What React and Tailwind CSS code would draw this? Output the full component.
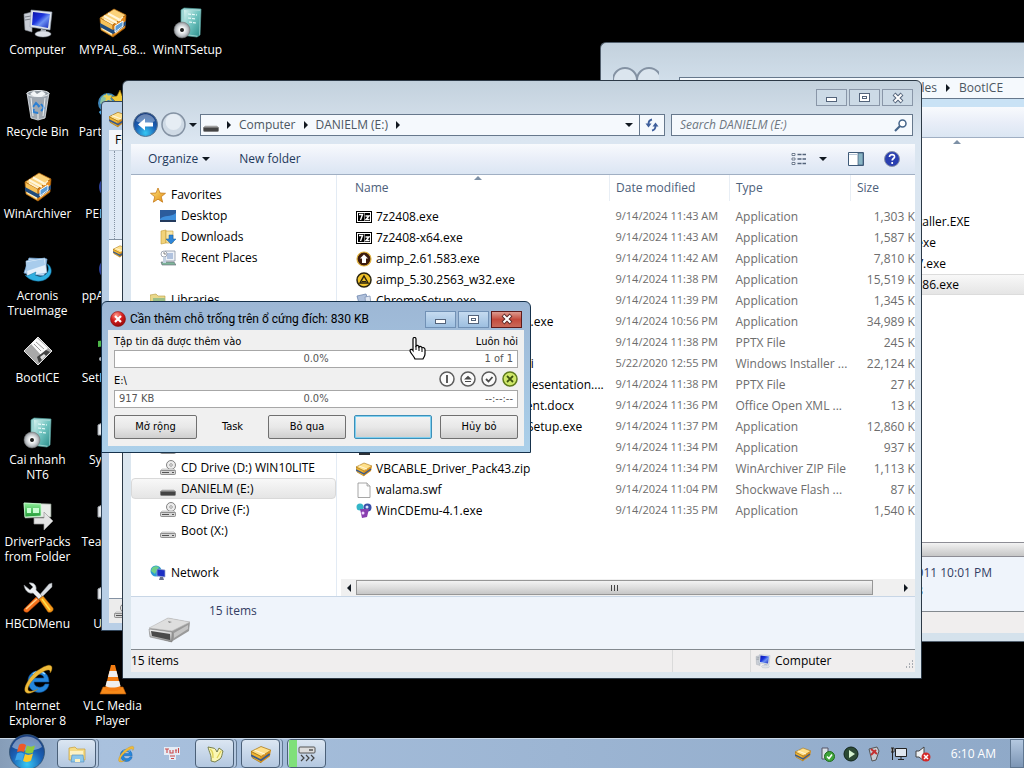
import React, { useState } from 'react';

/* ---------- icons ---------- */

const Svg = ({ size = 16, box = 16, className = '', children }) => (
    <svg width={size} height={size} viewBox={`0 0 ${box} ${box}`} className={`shrink-0 ${className}`} aria-hidden="true">
        {children}
    </svg>
);

const Gradients = () => (
    <svg className="absolute size-0" aria-hidden="true">
        <defs>
            <linearGradient id="screen" x1="0" y1="0" x2="1" y2="1">
                <stop offset="0" stopColor="#0a10a8" />
                <stop offset="0.4" stopColor="#1c35dc" />
                <stop offset="0.6" stopColor="#6d92f4" />
                <stop offset="1" stopColor="#1526b8" />
            </linearGradient>
            <linearGradient id="teal" x1="0" y1="0" x2="1" y2="1">
                <stop offset="0" stopColor="#d8f2f0" />
                <stop offset="0.5" stopColor="#6fc3bf" />
                <stop offset="1" stopColor="#2d8f8c" />
            </linearGradient>
            <linearGradient id="metal" x1="0" y1="0" x2="0" y2="1">
                <stop offset="0" stopColor="#f8f8f8" />
                <stop offset="1" stopColor="#8c8c8c" />
            </linearGradient>
            <linearGradient id="gold" x1="0" y1="0" x2="1" y2="1">
                <stop offset="0" stopColor="#ffe680" />
                <stop offset="1" stopColor="#e08a10" />
            </linearGradient>
            <linearGradient id="green" x1="0" y1="0" x2="0" y2="1">
                <stop offset="0" stopColor="#8ff09a" />
                <stop offset="1" stopColor="#1f9a34" />
            </linearGradient>
            <radialGradient id="disc">
                <stop offset="0" stopColor="#777" />
                <stop offset="0.25" stopColor="#fff" />
                <stop offset="0.7" stopColor="#c4c8cc" />
                <stop offset="1" stopColor="#8b8f94" />
            </radialGradient>
            <radialGradient id="blueBall" cx="0.5" cy="0.85" r="0.9">
                <stop offset="0" stopColor="#36c8f4" />
                <stop offset="0.5" stopColor="#1a5fb4" />
                <stop offset="1" stopColor="#1a3672" />
            </radialGradient>
            <radialGradient id="redBall" cx="0.4" cy="0.25" r="0.8">
                <stop offset="0" stopColor="#ff9a8a" />
                <stop offset="0.5" stopColor="#d41d1d" />
                <stop offset="1" stopColor="#8a0808" />
            </radialGradient>
        </defs>
    </svg>
);

const ComputerIcon = ({ size }) => (
    <Svg size={size} box={32}>
        <path d="M2 7l8-2v20l-7-2z" fill="#c9ced6" stroke="#8d939b" strokeWidth="0.6" />
        <path d="M3 10l6-1M3 13l6-1" stroke="#7b8088" />
        <path d="M9 3l21 2-2 18-20-3z" fill="#dfe5ee" stroke="#8d98a8" strokeWidth="0.6" />
        <path d="M11 5l17 2-2 14-16-3z" fill="url(#screen)" />
        <path d="M19 22l5 1v3h-6z" fill="#b4bac4" />
        <ellipse cx="21" cy="27" rx="8" ry="3" fill="#dde1e8" stroke="#979ea8" strokeWidth="0.5" />
    </Svg>
);

const ArchiveIcon = ({ size }) => (
    <Svg size={size} box={32}>
        <path d="M3 11L17 2l12 6-13 10z" fill="#fbd27a" stroke="#b86a0c" strokeWidth="0.7" />
        <path d="M3 11l13 7v12L4 23z" fill="#f7c25a" stroke="#b86a0c" strokeWidth="0.7" />
        <path d="M16 18l13-10-1 13-12 9z" fill="#e38a1c" stroke="#a85c08" strokeWidth="0.7" />
        <path d="M7 9l13 7M11 6.500l13 7" stroke="#fff6dc" strokeWidth="2" />
        <path d="M7 12l9 5M21 14l5-4M5 21l10 6M18 26l9-7" stroke="#fff1cf" strokeWidth="1.500" />
        <path d="M3 16l13 7 13-9v4l-13 9-13-7z" fill="#1f4a7c" />
        <path d="M18 19l8-5v5l-8 6z" fill="#5a9bd6" stroke="#fff" strokeWidth="1" />
    </Svg>
);

const SetupIcon = ({ size }) => (
    <Svg size={size} box={32}>
        <path d="M9 3l3-2 17 1-1 26-3 2-16-2z" fill="#9fd6d4" stroke="#4d9c99" strokeWidth="0.7" />
        <path d="M12 3l16 1-1 25-14-2z" fill="url(#teal)" />
        <path d="M16 7l9 1M16 11l8 1M17 15l7 1" stroke="#e9fbfa" strokeWidth="1.200" strokeDasharray="3 1" />
        <circle cx="10" cy="23" r="8" fill="url(#disc)" stroke="#777" strokeWidth="0.5" />
        <circle cx="10" cy="23" r="2" fill="#222" />
    </Svg>
);

const BinIcon = ({ size }) => (
    <Svg size={size} box={32}>
        <path d="M5 4h22l-4 25-7 2-7-2z" fill="#bcc6d0" fillOpacity="0.85" stroke="#e9eef3" strokeWidth="0.8" />
        <ellipse cx="16" cy="4.500" rx="11" ry="3" fill="#8e979f" stroke="#eef2f6" strokeWidth="1" />
        <path d="M8 5l4-3 3 3 5-3 4 3-5 3-8-1z" fill="#f3f6f8" />
        <path d="M11 18l3-4 3 3-1 1M19 15l3 4-3 3M12 20l-1 3 5 1" fill="none" stroke="#2a7fd4" strokeWidth="2" />
        <path d="M9 9l2 18M23 9l-2 18M16 25v5" stroke="#f4f8fb" strokeWidth="0.9" />
    </Svg>
);

const GlobeStarIcon = ({ size }) => (
    <Svg size={size} box={32}>
        <circle cx="11" cy="14" r="10" fill="#3f86b8" />
        <path d="M4 9c4-5 8-4 11-2-1 4-5 2-5 6s-5 4-7 1z" fill="#8cc6a8" />
        <path d="M23 1l2 6 6 1-5 4 1 6-5-3-5 3 1-6-4-4 6-1z" fill="#f1c936" stroke="#a77b08" strokeWidth="0.6" />
        <path d="M9 4l2 3 4-1-2 3 2 3-4-1-3 2 1-4-3-2 3-1z" fill="#e8cf52" />
        <path d="M3 22l6 8" stroke="#4aa6e0" strokeWidth="3" />
    </Svg>
);

const BallIcon = ({ size }) => (
    <Svg size={size} box={32}>
        <circle cx="13" cy="16" r="11" fill="#2b3f98" />
        <path d="M4 10c4-6 12-7 16-2-6 0-8 6-15 6z" fill="#5fae4a" />
    </Svg>
);

const ImageIcon = ({ size }) => (
    <Svg size={size} box={32}>
        <path d="M7 5l18 1-3 17-20-3z" fill="#c7ddf4" stroke="#6fa2d2" strokeWidth="0.8" />
        <path d="M4 8l19-3 2 15-20 3z" fill="#e3f0fc" stroke="#8ab8e0" strokeWidth="0.7" />
        <path d="M5 9l17-3 1 6-18 6z" fill="#a8ccec" />
        <path d="M3 22c6 8 22 9 26-2 1-4-1-8-4-9 3 5 1 10-4 12-4 1-5 0-8-1l1-3-9 4z" fill="#2fb0e2" stroke="#126f9e" strokeWidth="0.5" />
    </Svg>
);

const FloppyIcon = ({ size }) => (
    <Svg size={size} box={32}>
        <path d="M16 2l14 14-14 14L2 16z" fill="#a9a9a9" stroke="#e6e6e6" />
        <path d="M9 9l6-6 11 10-7 7z" fill="#fafafa" />
        <path d="M12 9l7 7M14 7l8 7" stroke="#999" />
        <path d="M15 22l9-7 4 2-11 11z" fill="#444" />
        <path d="M18 22l4-3 2 2-4 4z" fill="#ddd" />
    </Svg>
);

const DriverIcon = ({ size }) => (
    <Svg size={size} box={32}>
        <path d="M2 4l27 1v13l-26 1z" fill="#e8ece8" stroke="#7d8a7d" strokeWidth="0.7" />
        <path d="M2 4l17 1v12l-16 1z" fill="url(#green)" stroke="#c9ffd2" strokeWidth="0.8" />
        <path d="M5 9h4v5H5zM11 9h6v5h-6z" fill="#c9ffd2" />
        <path d="M12 19h10v-6l9 9-9 9v-6H12z" fill="#e4e4e4" stroke="#9b9b9b" strokeWidth="0.7" />
    </Svg>
);

const ToolsIcon = ({ size }) => (
    <Svg size={size} box={32}>
        <path d="M30 2l-3 1-12 14 2 2L30 6z" fill="#d8dde2" stroke="#84898f" strokeWidth="0.5" />
        <path d="M2 28l12-12 4 4L6 31c-3 1-5-1-4-3z" fill="#f5701c" stroke="#a83c04" strokeWidth="0.5" />
        <path d="M4 28l11-10" stroke="#ffd28a" strokeWidth="1.500" />
        <path d="M2 4c1 7 6 9 9 8l6 6 3-3-6-6c1-4-2-8-7-7l4 4-3 3z" fill="#eceff2" stroke="#84898f" strokeWidth="0.6" />
        <path d="M17 18l4-3 10 12c1 3-2 5-5 4z" fill="#f79a1a" stroke="#a85c08" strokeWidth="0.5" />
        <path d="M20 18l8 11" stroke="#ffe24a" strokeWidth="1.500" />
    </Svg>
);

const IEIcon = ({ size }) => (
    <Svg size={size} box={32}>
        <path d="M27 19H12c0 6 9 7 11 2h4c-2 12-20 11-21-2C5 5 27 3 27 19zm-5-4c-1-5-9-5-10 0z" fill="#2587dd" stroke="#0d4f96" strokeWidth="0.6" />
        <path d="M11 11c3-3 9-3 12 0" stroke="#9fdcff" strokeWidth="1.500" fill="none" />
        <path d="M5 30c-6-2 1-15 10-22 8-6 15-8 15-3 0 2-1 4-2 5 1-4-3-4-9 0C11 15 3 26 7 28c3 1 7-1 9-2-4 3-8 5-11 4z" fill="#efbb3a" stroke="#a3740f" strokeWidth="0.4" />
    </Svg>
);

const ConeIcon = ({ size }) => (
    <Svg size={size} box={32}>
        <path d="M6 24h20l3 7H3z" fill="#f68a1a" stroke="#b85708" strokeWidth="0.6" />
        <path d="M14 2h4l6 24c-4 3-12 3-16 0z" fill="#f47d12" />
        <path d="M12.500 8h7l1.500 6H11zM9.800 18h12.400l1.300 5c-5 2-11 2-15 0z" fill="#efefef" />
    </Svg>
);

const MiscIcon = ({ size }) => (
    <Svg size={size} box={32}>
        <path d="M1 6l8-1v6l-8 1z" fill="#4cb648" />
        <circle cx="4" cy="24" r="2" fill="#a9b0b8" />
        <path d="M12 10l14 8" stroke="#99a" strokeWidth="3" />
    </Svg>
);

const PageIcon = ({ size }) => (
    <Svg size={size} box={32}>
        <path d="M1 8l8-4h14v14H1z" fill="#e8ebee" stroke="#9a9fa6" />
    </Svg>
);

const StarIcon = () => (
    <Svg>
        <path d="M8 1l2 5 5.500.3-4.300 3.500 1.500 5.400L8 12.200l-4.700 3 1.500-5.400L.5 6.300 6 6z" fill="url(#gold)" stroke="#c77b1a" strokeWidth="0.8" />
    </Svg>
);

const DesktopIcon = () => (
    <Svg>
        <path d="M0 2h16v12H0z" fill="#2c5c9c" />
        <path d="M0 11c5-5 10-1 16-6v7H0z" fill="#3f8fdc" />
        <path d="M0 12h16v2H0z" fill="#233a5c" />
    </Svg>
);

const DownloadsIcon = () => (
    <Svg>
        <path d="M1 2l5-1v13l-5 1z" fill="#f1d27a" stroke="#c59c38" strokeWidth="0.6" />
        <path d="M6 2h7v12H6z" fill="#f8e6a8" stroke="#c59c38" strokeWidth="0.6" />
        <path d="M9 6h4v4h3l-5 5-5-5h3z" fill="#2f86d8" stroke="#145a9c" strokeWidth="0.5" />
    </Svg>
);

const RecentIcon = () => (
    <Svg>
        <path d="M5 1h10v10H5z" fill="#eef2f8" stroke="#8b94a3" strokeWidth="0.8" />
        <path d="M7 4h6M7 6h6M7 8h6" stroke="#7493c4" />
        <circle cx="4" cy="4" r="3" fill="#fff" stroke="#8b94a3" strokeWidth="0.8" />
        <path d="M4 2v2h2" stroke="#555" strokeWidth="0.7" fill="none" />
        <path d="M1 12h13l2 3H2z" fill="#7fb59a" stroke="#667" strokeWidth="0.6" />
        <path d="M3 7h3v6H3z" fill="#c5d2e2" />
    </Svg>
);

const LibraryIcon = () => (
    <Svg>
        <path d="M0 3l6-1 2 2h7v10H0z" fill="#e9d88a" stroke="#b89a3c" strokeWidth="0.6" />
        <path d="M3 6h12v8H3z" fill="#9bbf8a" />
    </Svg>
);

const DriveIcon = ({ dark, cd }) => (
    <Svg>
        {cd && <circle cx="11" cy="5" r="4.500" fill="#ececec" stroke="#777" strokeWidth="0.9" />}
        {cd && <circle cx="11" cy="5" r="1.300" fill="#fff" stroke="#777" strokeWidth="0.7" />}
        <path d="M2 9h12l2 2H0z" fill={dark ? '#a5a5a5' : '#e6e6e6'} stroke={dark ? '#999' : '#9a9a9a'} strokeWidth="0.5" />
        <rect x="0.500" y="10.500" width="15" height="4" rx="1" fill={dark ? '#444' : '#d6d6d6'} stroke="#7a7a7a" strokeWidth="0.8" />
        {!dark && <path d="M2 12.500h7M12 12.500h2" stroke="#555" />}
    </Svg>
);

const NetworkIcon = () => (
    <Svg>
        <circle cx="6" cy="6" r="5.500" fill="#2b9ad4" />
        <path d="M2 3c2-2 5-2 7-1L7 5 5 9 1 6z" fill="#6ed08a" />
        <path d="M7 4l8 1v7l-8-1z" fill="#1c2fc4" stroke="#9aa6cc" strokeWidth="0.7" />
        <path d="M10 12h3l1 3H9z" fill="#67708c" />
    </Svg>
);

const SevenZipIcon = () => (
    <Svg>
        <rect x="0.500" y="2.500" width="15" height="11" fill="#fff" stroke="#000" strokeWidth="1" />
        <path d="M2 4h6v8H2zM8.500 4H14v8H8.500z" fill="#000" />
        <path d="M3 5.500h3.500L4.500 11M9.500 7h3.500l-3 3.500h3.500" stroke="#fff" strokeWidth="1.400" fill="none" />
    </Svg>
);

const AimpOldIcon = () => (
    <Svg>
        <circle cx="8" cy="8" r="7" fill="#3c1c10" stroke="#e2b33c" strokeWidth="1.200" />
        <path d="M8 3.500l4 4h-2V12H6V7.500H4z" fill="#fff" />
    </Svg>
);

const AimpIcon = () => (
    <Svg>
        <circle cx="8" cy="8" r="7" fill="#f0c22a" stroke="#2a2410" strokeWidth="1.500" />
        <path d="M8 4l4 7H4z" fill="none" stroke="#2a2410" strokeWidth="1.500" />
        <path d="M6 9.500h4" stroke="#2a2410" />
    </Svg>
);

const InstallerIcon = () => (
    <Svg>
        <path d="M1 3l9-2 3 9-9 4z" fill="#aebfda" stroke="#6f87ae" strokeWidth="0.8" />
        <path d="M9 4l5-1 1 9-5 2z" fill="#dfe6f2" stroke="#8093b4" strokeWidth="0.8" />
    </Svg>
);

const FileIcon = () => (
    <Svg>
        <path d="M2 1h9l3 3v11.500H2z" fill="#fdfdfd" stroke="#8f8f8f" strokeWidth="0.8" />
        <path d="M11 1v3h3" fill="#e4e4e4" stroke="#8f8f8f" strokeWidth="0.7" />
    </Svg>
);

const DarkExeIcon = () => (
    <Svg>
        <path d="M3 3h11v12H3z" fill="#2c3036" />
    </Svg>
);

const ZipIcon = ({ size = 16 }) => (
    <Svg size={size}>
        <path d="M0 6l8-4 8 3-8 5z" fill="#ffe08a" stroke="#a87410" strokeWidth="0.6" />
        <path d="M0 6l8 4v5L1 11z" fill="#f2b632" stroke="#a87410" strokeWidth="0.6" />
        <path d="M8 10l8-5-1 5-7 5z" fill="#d8901a" />
        <path d="M0 9l8 4 7-5" stroke="#3b5a8c" strokeWidth="1.500" fill="none" />
        <path d="M3 5l8 3" stroke="#fff6d8" />
    </Svg>
);

const CdEmuIcon = () => (
    <Svg>
        <circle cx="4" cy="4" r="3.500" fill="#35b6c8" />
        <circle cx="11.500" cy="4.500" r="4" fill="#3a4fa8" />
        <path d="M4 6h9l-2 8-5 1z" fill="#8a3fb0" />
        <circle cx="11" cy="4" r="1.500" fill="#d9e6ff" />
        <circle cx="7" cy="10" r="1.500" fill="#f0d8ff" />
    </Svg>
);

const FlagIcon = () => (
    <Svg size={36} box={36}>
        <circle cx="18" cy="18" r="17.500" fill="url(#blueBall)" stroke="#31506f" strokeWidth="0.8" />
        <path d="M3 13C8-1 28-1 33 13c-8 5-22 5-30 0z" fill="#fff" fillOpacity="0.4" />
        <path d="M10 11c3-2 5-1 7 0l-2 7c-2-1-4-1-7 0z" fill="#ee5a28" />
        <path d="M18 11.500c3 1.500 5 1.500 8 0l-2 7c-3 1.500-5 1-8 0z" fill="#8fcb3c" />
        <path d="M8 19.500c3-1.500 5-1 7 .5l-2 7c-2-1.500-4-1.500-7-.5z" fill="#3fa4ea" />
        <path d="M16 20c3 1.500 5 1 8-.5l-2 7c-3 2-5 1.500-8 .5z" fill="#fbc92a" />
    </Svg>
);

const FolderIcon = () => (
    <Svg size={20} box={20}>
        <path d="M2 4l6-1 2 2h8v11H2z" fill="#f5dc86" stroke="#c79e3a" strokeWidth="0.7" />
        <path d="M3 7h13v4H3z" fill="#fdf3c4" />
        <path d="M5 11h11l1 7H4z" fill="#8cc8ec" stroke="#5a93bd" strokeWidth="0.7" />
        <path d="M8 15h5v3H8z" fill="#fdf3c4" />
    </Svg>
);

const TutiIcon = () => (
    <Svg size={20} box={20}>
        <path d="M2 3h16v8h-4v5H7v-5H2z" fill="#fff" fillOpacity="0.7" />
        <path d="M3 5h4M5 5v4M8 6v3h3V6M13 6h2M14 6v3M16.500 4v5M8 12h5M9 14.500h3" stroke="#cc4a4a" strokeWidth="1.100" fill="none" />
    </Svg>
);

const HornIcon = () => (
    <Svg size={20} box={20}>
        <path d="M3 3l5 1c2 0 3 2 4 4l2-4 4 3c-1 3-1 6-3 8l-5 3-4-1c1-5-2-9-3-14z" fill="#fbf7b4" stroke="#6b7440" strokeWidth="0.9" />
        <path d="M5 5c3 2 3 5 3 9M16 7l-4 7" stroke="#e0d45a" strokeWidth="1.300" fill="none" />
    </Svg>
);

const CopyIcon = () => (
    <Svg size={20} box={20}>
        <rect x="2" y="3" width="16" height="6" rx="1" fill="#dcdcdc" stroke="#555" />
        <path d="M12 6h4" stroke="#555" strokeWidth="1.500" />
        <path d="M4 11l3 3-3 3M9 11l3 3-3 3M14 11l3 3-3 3" stroke="#444" strokeWidth="1.200" fill="none" />
    </Svg>
);

const RemovableDriveIcon = () => (
    <svg width="44" height="26" viewBox="0 0 44 26" aria-hidden="true">
        <path d="M1 12L20 1l22 4-1 9-18 11L2 19z" fill="#9a9a9a" />
        <path d="M1 11L20 1l22 4-18 9z" fill="#dedede" stroke="#b9b9b9" strokeWidth="0.6" />
        <path d="M1 12l23 3v10L2 20z" fill="url(#metal)" stroke="#777" strokeWidth="0.5" />
        <path d="M3 14l19 3v6L4 19z" fill="#4a4a4a" />
        <path d="M26 16l14-8v4l-14 9z" fill="#c4c4c4" />
        <path d="M20 4l4 1-3 1z" fill="#888" />
    </svg>
);

/* ---------- desktop ---------- */

const shortcuts = [
    ['Computer', ComputerIcon],
    ['Recycle Bin', BinIcon],
    ['WinArchiver', ArchiveIcon],
    ['Acronis TrueImage', ImageIcon],
    ['BootICE', FloppyIcon],
    ['Cai nhanh NT6', SetupIcon],
    ['DriverPacks from Folder', DriverIcon],
    ['HBCDMenu', ToolsIcon],
    ['Internet Explorer 8', IEIcon],
    ['MYPAL_68...', ArchiveIcon],
    ['PartitionWiz', GlobeStarIcon],
    ['PENetwrk', BallIcon],
    ['ppApps Go', BallIcon],
    ['SetHDBoot', MiscIcon],
    ['Synaptic Cap', PageIcon],
    ['TeamViewr', PageIcon],
    ['Unlock', PageIcon],
    ['VLC Media Player', ConeIcon],
    ['WinNTSetup', SetupIcon],
];

const Desktop = () => (
    <div className="grid h-full grid-flow-col grid-rows-9 auto-cols-[75px] justify-start">
        {shortcuts.map(([name, Icon]) => (
            <button key={name} className="flex flex-col items-center px-1 pt-[7px] text-white">
                <Icon size={32} />
                <span className="mt-[3px] text-center leading-[15px]">{name}</span>
            </button>
        ))}
    </div>
);

const CaptionButtons = ({ active, className = '' }) => (
    <div className={`flex gap-0.5 text-[#53637a] ${className}`}>
        {['Minimize', 'Maximize', 'Close'].map((name) => (
            <button
                key={name}
                aria-label={name}
                className={`flex h-[17px] w-[31px] items-center justify-center border ${
                    active && name === 'Close'
                        ? 'border-[#5e1a1a] bg-linear-to-b from-[#dc9a90] via-[#c44a3c] to-[#c9695a]'
                        : active
                            ? 'border-[#7191b5] bg-linear-to-b from-[#c5dbf0] to-[#9dbfe0]'
                            : 'border-[#8996a8] bg-[#ccdae6]'
                }`}
            >
                {name === 'Minimize' && <span className="mt-1 h-[5px] w-[11px] border border-current bg-white" />}
                {name === 'Maximize' && (
                    <span className="flex h-[9px] w-[11px] items-center justify-center border border-current bg-white">
                        <span className="h-[3px] w-[5px] border border-current" />
                    </span>
                )}
                {name === 'Close' && (
                    <Svg size={12} box={12}>
                        <path d="M2 2l8 8M10 2l-8 8" stroke={active ? '#5a2a2a' : '#53637a'} strokeWidth="4" />
                        <path d="M2.500 2.500l7 7M9.500 2.500l-7 7" stroke="#fff" strokeWidth="2" />
                    </Svg>
                )}
            </button>
        ))}
    </div>
);

/* ---------- explorer window ---------- */

const navGroups = [
    { name: 'Favorites', icon: <StarIcon />, items: [['Desktop', <DesktopIcon />], ['Downloads', <DownloadsIcon />], ['Recent Places', <RecentIcon />]] },
    { name: 'Libraries', icon: <LibraryIcon />, items: [['Documents', <LibraryIcon />], ['Music', <LibraryIcon />], ['Pictures', <LibraryIcon />], ['Videos', <LibraryIcon />]] },
    {
        name: 'Computer',
        icon: <ComputerIcon size={16} />,
        items: [
            ['Local Disk (C:)', <DriveIcon />],
            ['CD Drive (D:) WIN10LITE', <DriveIcon cd />],
            ['DANIELM (E:)', <DriveIcon dark />],
            ['CD Drive (F:)', <DriveIcon cd />],
            ['Boot (X:)', <DriveIcon />],
        ],
    },
    { name: 'Network', icon: <NetworkIcon />, items: [] },
];

const files = [
    ['7z2408.exe', <SevenZipIcon />, '9/14/2024 11:43 AM', 'Application', '1,303 KB'],
    ['7z2408-x64.exe', <SevenZipIcon />, '9/14/2024 11:43 AM', 'Application', '1,587 KB'],
    ['aimp_2.61.583.exe', <AimpOldIcon />, '9/14/2024 11:42 AM', 'Application', '7,810 KB'],
    ['aimp_5.30.2563_w32.exe', <AimpIcon />, '9/14/2024 11:38 PM', 'Application', '15,519 KB'],
    ['ChromeSetup.exe', <InstallerIcon />, '9/14/2024 11:39 PM', 'Application', '1,345 KB'],
    ['Firefox_Setup_w64_Installer.exe', <InstallerIcon />, '9/14/2024 10:56 PM', 'Application', '34,989 KB'],
    ['Lesson.pptx', <FileIcon />, '9/14/2024 11:38 PM', 'PPTX File', '245 KB'],
    ['MediaPlayerClassic_w64.msi', <InstallerIcon />, '5/22/2020 12:55 PM', 'Windows Installer ...', '22,124 KB'],
    ['My Microsoft PowerPoint Presentation....', <FileIcon />, '9/14/2024 11:38 PM', 'PPTX File', '27 KB'],
    ['My Microsoft Word Document.docx', <FileIcon />, '9/14/2024 11:36 PM', 'Office Open XML ...', '13 KB'],
    ['PotPlayerMini_x64_Full_v1_Setup.exe', <InstallerIcon />, '9/14/2024 11:37 PM', 'Application', '12,860 KB'],
    ['Rufus.exe', <DarkExeIcon />, '9/14/2024 11:34 PM', 'Application', '937 KB'],
    ['VBCABLE_Driver_Pack43.zip', <ZipIcon />, '9/14/2024 11:34 PM', 'WinArchiver ZIP File', '1,113 KB'],
    ['walama.swf', <FileIcon />, '9/14/2024 11:04 PM', 'Shockwave Flash ...', '87 KB'],
    ['WinCDEmu-4.1.exe', <CdEmuIcon />, '9/14/2024 11:35 PM', 'Application', '1,540 KB'],
];

const Caret = ({ right, className = '' }) => (
    <Svg size={8} box={8} className={className}>
        <path d={right ? 'M2 0l4 4-4 4z' : 'M0 2h8L4 6z'} fill="#111820" />
    </Svg>
);

const AddressRow = () => (
    <div className="flex items-center pr-2 pl-[10px]">
        <button aria-label="Back">
            <Svg size={25} box={25}>
                <circle cx="12.500" cy="12.500" r="12" fill="url(#blueBall)" stroke="#5d7690" />
                <path d="M3 9c3-9 16-9 19 0-5 3-14 3-19 0z" fill="#fff" fillOpacity="0.35" />
                <path d="M5 12.500l7-6v4h8v4h-8v4z" fill="#fff" />
            </Svg>
        </button>
        <button aria-label="Forward" className="ml-[3px]">
            <Svg size={25} box={25}>
                <circle cx="12.500" cy="12.500" r="11.500" fill="#cfdae5" stroke="#8492a3" strokeWidth="1.500" />
                <circle cx="12.500" cy="10" r="8" fill="#e6edf4" />
            </Svg>
        </button>
        <button aria-label="Recent pages" className="mx-[3px]">
            <Caret />
        </button>
        <div className="flex h-[22px] min-w-0 flex-1 items-center border border-[#66788c] bg-[#f5f9fd] pl-0.5 text-[#4c5661]">
            <DriveIcon dark />
            <Caret right className="ml-[6px]" />
            <span className="ml-[6px]">Computer</span>
            <Caret right className="ml-[6px]" />
            <span className="ml-[6px]">DANIELM (E:)</span>
            <Caret right className="ml-[6px]" />
            <button aria-label="Previous locations" className="mr-[6px] ml-auto">
                <Caret />
            </button>
            <button aria-label="Refresh" className="flex h-full w-[25px] items-center justify-center border-l border-[#66788c]">
                <Svg size={14} box={14}>
                    <path d="M7 1.500C4.500 2 3.500 3.500 3.500 6M7 12.500c2.500-.5 3.500-2 3.500-4.500" stroke="#3e5f9c" strokeWidth="1.800" fill="none" />
                    <path d="M.5 5.500h6l-3 4zM7.500 8.500h6l-3-4z" fill="#3e5f9c" />
                </Svg>
            </button>
        </div>
        <div className="ml-[6px] flex h-[22px] w-[242px] items-center border border-[#66788c] bg-[#f5f9fd] pr-1">
            <input
                type="search"
                aria-label="Search DANIELM (E:)"
                placeholder="Search DANIELM (E:)"
                className="min-w-0 flex-1 bg-transparent pl-2 outline-none placeholder:text-[#6d7680] placeholder:italic"
            />
            <Svg size={14} box={14}>
                <circle cx="8.500" cy="5.500" r="3.500" fill="#fff" stroke="#45658a" strokeWidth="1.500" />
                <path d="M6 8l-5 5" stroke="#45658a" strokeWidth="2.200" />
            </Svg>
        </div>
    </div>
);

const Toolbar = () => (
    <div className="flex h-[31px] items-center border-b border-[#a0afc3] bg-linear-to-b from-[#f8fafd] via-[#e9eef8] to-[#dbe6f3] pr-[15px] pl-[17px] text-[#1e395b]">
        <button className="flex items-center gap-1">
            Organize <Caret />
        </button>
        <button className="ml-[29px]">New folder</button>
        <button aria-label="Change view" className="ml-auto flex items-center gap-3">
            <Svg size={16}>
                <path d="M1 2.500h3v2H1zM1 7h3v2H1zM1 11.500h3v2H1z" fill="#fff" stroke="#53637a" strokeWidth="0.8" />
                <path d="M6.500 3.500H15M6.500 8H15M6.500 12.500H15" stroke="#53637a" strokeWidth="1.300" strokeDasharray="4 1" />
            </Svg>
            <Caret />
        </button>
        <button aria-label="Preview pane" className="ml-[21px]">
            <Svg size={16}>
                <path d="M.5 1.500h15v13H.5z" fill="#fff" stroke="#3f5a78" />
                <path d="M10 2h5v12h-5z" fill="#88b4c4" stroke="#3f5a78" strokeWidth="0.7" />
                <path d="M1 3.500h9" stroke="#b8c6d6" />
            </Svg>
        </button>
        <button aria-label="Help" className="ml-5">
            <Svg size={16}>
                <circle cx="8" cy="8" r="7.500" fill="#2a3fb0" stroke="#8a93a8" />
                <path d="M5.500 6c0-3.500 5.500-3 5 0-.3 1.500-2.300 1.700-2.300 3.500M8.200 11v2" stroke="#fff" strokeWidth="1.700" fill="none" />
            </Svg>
        </button>
    </div>
);

const NavPane = ({ selected, onSelect }) => (
    <nav className="flex w-[206px] shrink-0 flex-col gap-[21px] border-r border-[#e3ebf4] pt-[9px]">
        {navGroups.map((group) => (
            <div key={group.name}>
                <a href="#" className="flex h-[21px] items-center gap-[5px] pl-[19px]">
                    {group.icon}
                    {group.name}
                </a>
                {group.items.map(([name, icon]) => (
                    <a
                        key={name}
                        href="#"
                        onClick={() => onSelect(name)}
                        className={`flex h-[21px] items-center gap-[5px] rounded-sm border pl-[28px] ${
                            selected === name ? 'border-[#d9d9d9] bg-linear-to-b from-[#f8f8f8] to-[#e5e5e5]' : 'border-transparent'
                        }`}
                    >
                        {icon}
                        {name}
                    </a>
                ))}
            </div>
        ))}
    </nav>
);

const FileTable = () => (
    <div className="relative min-h-0 flex-1 overflow-hidden">
        <Svg size={8} box={8} className="absolute top-0 left-[133px]">
            <path d="M0 5l4-4 4 4z" fill="#7d90a5" />
        </Svg>
        <table className="w-[calc(100%+18px)] table-fixed border-collapse text-left whitespace-nowrap text-[#6d6d6d]">
            <colgroup>
                <col />
                <col className="w-[120px]" />
                <col className="w-[121px]" />
                <col className="w-[82px]" />
            </colgroup>
            <thead>
                <tr className="h-[26px] text-[#4c607a]">
                    {['Name', 'Date modified', 'Type', 'Size'].map((head) => (
                        <th key={head} className="border-r border-[#e8eef5] p-0 pl-[6px] font-normal first:pl-[14px]">{head}</th>
                    ))}
                </tr>
            </thead>
            <tbody>
                <tr className="h-[5px]" />
                {files.map(([name, icon, date, type, size]) => (
                    <tr key={name} className="h-[21px]">
                        <td className="p-0 pl-[15px] text-black">
                            <span className="flex items-center gap-1">{icon}{name}</span>
                        </td>
                        <td className="p-0 pl-[6px] text-[11px]">{date}</td>
                        <td className="p-0 pl-[6px]">{type}</td>
                        <td className="p-0 pr-[10px] text-right">{size}</td>
                    </tr>
                ))}
            </tbody>
        </table>
    </div>
);

const HScroll = () => (
    <div className="flex h-[17px] items-center bg-[#f0f0f0]">
        <button aria-label="Scroll left" className="flex w-[15px] justify-center">
            <Caret right className="rotate-180" />
        </button>
        <div className="flex h-[15px] flex-1 items-center justify-center gap-0.5 border border-[#979797] bg-linear-to-b from-[#f3f3f3] via-[#dedede] to-[#c6c6c6]">
            {[0, 1, 2].map((n) => <span key={n} className="h-[6px] w-px bg-[#444]" />)}
        </div>
        <button aria-label="Scroll right" className="ml-6 flex w-[18px] justify-center">
            <Caret right />
        </button>
    </div>
);

const Explorer = () => {
    const [selected, setSelected] = useState('DANIELM (E:)');

    return (
        <section className="absolute top-20 right-[102px] left-[122px] flex flex-col rounded-t-md border border-[#2c3946] bg-linear-to-b from-[#c3d1dd] via-[#dbe6f1] via-10% to-[#dbe6ee] pb-[6px] text-black">
            <CaptionButtons className="mt-2 mr-2 self-end" />
            <div className="mt-[6px]">
                <AddressRow />
            </div>
            <div className="mt-[7px] mr-[6px] ml-2 flex flex-col bg-white">
                <Toolbar />
                <div className="flex h-[421px]">
                    <NavPane selected={selected} onSelect={setSelected} />
                    <div className="ml-1 flex min-w-0 flex-1 flex-col">
                        <FileTable />
                        <HScroll />
                    </div>
                </div>
                <div className="flex h-[53px] gap-[17px] border-t border-[#c8d6e6] bg-[#eff4fb] pl-[17px] text-[#333d63]">
                    <div className="pt-5">
                        <RemovableDriveIcon />
                    </div>
                    <p className="pt-1.5">15 items</p>
                </div>
                <footer className="flex h-[23px] items-center border-t border-[#83898f] bg-[#f0eeee]">
                    <span className="flex-1">15 items</span>
                    <span className="h-full w-[79px] border-x border-[#dadada]" />
                    <span className="flex w-[164px] items-center gap-1 pl-1">
                        <ComputerIcon size={16} />
                        Computer
                        <Svg size={10} box={10} className="mt-2 mr-px ml-auto">
                            <path d="M8 1h1M5 4h1M8 4h1M2 7h1M5 7h1M8 7h1" stroke="#a9adb3" strokeWidth="2" />
                        </Svg>
                    </span>
                </footer>
            </div>
        </section>
    );
};

/* ---------- windows behind ---------- */

const installers = [
    ['BootICE_Installer.EXE', 'w-[361px]'],
    ['BOOTICE_old.exe', 'w-[327px]'],
    ['BOOTICE_V.exe', 'w-[337px]'],
    ['BOOTICEx86.exe', 'w-[350px]'],
];

const BootIceWindow = () => (
    <section className="absolute top-[42px] right-0 left-[600px] rounded-tl-md border border-r-0 border-[#53606e] bg-linear-to-b from-[#c3d1dd] via-[#d9e6f2] via-10% to-[#d5e2ec] pb-2 text-black">
        <div className="flex h-[34px] items-end pl-[12px]">
            <Svg size={46} box={46} className="-mb-9">
                <circle cx="12" cy="13" r="12" fill="#dbe5ee" stroke="#8492a3" strokeWidth="2" />
                <circle cx="36" cy="13" r="12" fill="#dbe5ee" stroke="#8492a3" strokeWidth="2" />
            </Svg>
        </div>
        <div className="ml-[78px] flex h-[22px] items-center gap-[7px] border border-r-0 border-[#66788c] bg-[#f5f9fd] text-[#4c5661]">
            <span className="w-[257px] text-right">Program Files</span>
            <Caret right />
            <span>BootICE</span>
        </div>
        <div className="ml-2 h-2 bg-[#c9e2f5]" />
        <div className="ml-2 h-[31px] border-b border-[#a0afc3] bg-linear-to-b from-[#f8fafd] via-[#e9eef8] to-[#dbe6f3]" />
        <div className="ml-2 h-[404px] bg-white">
            <div className="flex h-[73px] justify-end pt-px pr-[63px]">
                <Svg size={8} box={8}>
                    <path d="M0 5l4-4 4 4z" fill="#7d90a5" />
                </Svg>
            </div>
            {installers.map(([name, width], i) => (
                <div
                    key={name}
                    className={`flex h-[21px] items-center ${i === 3 ? 'border-y border-[#dcdcdc] bg-linear-to-b from-[#f8f8f8] to-[#e5e5e5]' : ''}`}
                >
                    <span className={`text-right ${width}`}>{name}</span>
                </div>
            ))}
        </div>
        <div className="ml-2 h-[15px] border-y border-[#8d8d95] bg-linear-to-b from-[#f3f3f3] to-[#c6c6c6]" />
        <div className="ml-2 h-[54px] bg-[#eff4fb] pt-2 text-[#333d63]">
            <p className="w-[383px] text-right">11/18/2011 10:01 PM</p>
            <p className="w-[314px] text-right leading-5">58 KB</p>
        </div>
        <div className="ml-2 h-[22px] border-t border-[#83898f] bg-[#f0eeee]" />
    </section>
);

const ArchiverWindow = () => (
    <section className="absolute top-[101px] left-[101px] h-[530px] w-[420px] rounded-t-sm border border-[#33475c] bg-[#b9cfe6] pt-2 pr-[7px] pb-[7px] pl-[7px] text-black">
        <div className="flex h-full flex-col">
            <ZipIcon size={18} />
            <div className="mt-0.5 flex h-5 shrink-0 items-center bg-[#f4f7fb] pl-[6px]">File</div>
            <div className="h-[89px] shrink-0 border-t border-[#bcc8d6] bg-[#dfe9f5] pl-[5px]">
                <div className="h-full border-l border-dotted border-[#8492a3]" />
            </div>
            <div className="flex-1 border-y border-[#8492a3] bg-white pt-1 pl-1">
                <ZipIcon size={14} />
            </div>
            <div className="flex h-6 shrink-0 items-center bg-[#ececec] pl-[5px]">
                <DriveIcon cd />
            </div>
        </div>
    </section>
);

/* ---------- copy dialog ---------- */

const Progress = ({ left, percent, right }) => (
    <div className="grid h-[18px] grid-cols-3 items-center border border-[#a7a7a7] bg-white px-1 text-[#555]">
        <span>{left}</span>
        <span className="text-center">{percent}</span>
        <span className="text-right">{right}</span>
    </div>
);

const roundButtons = [
    ['Pause', 'M8 4v8'],
    ['Eject', 'M5.500 8L8 5.500l2.500 2.500zM5 10.500h6'],
    ['Verify', 'M5 8l2.500 2.500L11.500 6'],
    ['Stop', 'M5 5l6 6M11 5l-6 6'],
];

const CopyDialog = () => (
    <section className="absolute top-[301px] left-[101px] w-[430px] rounded-t-md border border-[#16324c] bg-linear-to-b from-[#9db7d5] to-[#abd0ea] px-[6px] pb-[6px] font-['DejaVu_Sans_Condensed','DejaVu_Sans',sans-serif] text-[11px] text-black">
        <header className="flex h-[28px] items-center gap-1 pt-1.5 pr-0.5 pl-0.5">
            <Svg size={16}>
                <circle cx="8" cy="8" r="7.500" fill="url(#redBall)" stroke="#8a1414" strokeWidth="0.6" />
                <path d="M5 5l6 6M11 5l-6 6" stroke="#fff" strokeWidth="2.200" />
            </Svg>
            <h1 className="flex-1 font-[Roboto,'Open_Sans',sans-serif] text-xs">Cần thêm chỗ trống trên ổ cứng đích: 830 KB</h1>
            <CaptionButtons active />
        </header>
        <div className="bg-[#f0f0f0] px-[6px] pt-1 pb-[7px]">
            <div className="flex h-4 items-center justify-between">
                <span>Tập tin đã được thêm vào</span>
                <span>Luôn hỏi</span>
            </div>
            <Progress percent="0.0%" right="1 of 1" />
            <div className="flex h-[22px] items-center gap-[5px]">
                <span className="mr-auto pt-1">E:\</span>
                {roundButtons.map(([name, path]) => (
                    <button key={name} aria-label={name}>
                        <Svg size={16}>
                            <circle cx="8" cy="8" r="7" fill={name === 'Stop' ? '#cfe86a' : '#fbfbfb'} stroke={name === 'Stop' ? '#5e7a1c' : '#5c5c5c'} strokeWidth="1.500" />
                            <path d={path} stroke={name === 'Stop' ? '#3d5410' : '#4a4a4a'} strokeWidth={name === 'Eject' ? '1.200' : '1.800'} fill={name === 'Eject' ? '#4a4a4a' : 'none'} />
                        </Svg>
                    </button>
                ))}
            </div>
            <Progress left="917 KB" percent="0.0%" right="--:--:--" />
            <div className="mt-[7px] grid grid-cols-[83px_55px_78px_78px_78px] justify-between text-center">
                {['Mở rộng', 'Task', 'Bỏ qua', '', 'Hủy bỏ'].map((name) =>
                    name === 'Task' ? (
                        <span key={name} className="leading-6">{name}</span>
                    ) : (
                        <button
                            key={name}
                            aria-label={name || 'Retry'}
                            className={`h-6 rounded-xs border bg-linear-to-b from-[#f3f3f3] via-[#e8e8e8] to-[#cfcfcf] ${
                                name ? 'border-[#707070]' : 'border-[#3c8fb8] ring-1 ring-[#7fd0f0] ring-inset'
                            }`}
                        >
                            {name}
                        </button>
                    )
                )}
            </div>
        </div>
    </section>
);

const HandCursor = () => (
    <svg width="18" height="24" viewBox="0 0 18 24" className="absolute top-[337px] left-[409px]" aria-hidden="true">
        <path
            d="M4 2c0-2 3-2 3 0v7c1-1 3-.5 3 1 1-1 3-.5 3 1 1-1 3-.3 3 1.500V17c0 2-1 3-2 5H6c-1-3-4-5-5-8 0-2 2-2 3-.5z"
            fill="#fff"
            stroke="#000"
            strokeWidth="1.200"
        />
        <path d="M7 9v4M10 10v4M13 12v3" stroke="#000" />
    </svg>
);

/* ---------- taskbar ---------- */

const TaskButton = ({ label, stacked, progress, children }) => (
    <button
        aria-label={label}
        className={`flex h-full w-[39px] items-center justify-center rounded-sm border border-[#4b6078] bg-linear-to-b from-[#dbe6f2] to-[#b4c8e0] ${
            stacked ? 'mr-[7px] shadow-[2px_0_0_#b4c8e0,3px_0_0_#5f7690]' : 'mr-1'
        }`}
    >
        {progress && <span className="-ml-2 h-full w-2 bg-[#7fe07a]" />}
        {children}
    </button>
);

const trayIcons = [
    ['WinArchiver', <ZipIcon />],
    ['Safely remove', (
        <Svg>
            <path d="M3 2h6v11H3z" fill="#d8dfe6" stroke="#556" />
            <circle cx="10.500" cy="10.500" r="5" fill="#3fa53a" stroke="#1f6a1c" />
            <path d="M8 10.500l2 2 3-4" stroke="#fff" strokeWidth="1.500" fill="none" />
        </Svg>
    )],
    ['Play', (
        <Svg>
            <circle cx="8" cy="8" r="7" fill="#2c4a34" stroke="#10231a" />
            <path d="M6 4l6 4-6 4z" fill="#d5f2d0" />
        </Svg>
    )],
    ['Keyboard', (
        <Svg>
            <path d="M2 3l8-2 2 4-3 9-4 1z" fill="#c8ccd2" stroke="#555" />
            <path d="M4 3l6 5M9 4L4 9" stroke="#c43030" strokeWidth="2" />
        </Svg>
    )],
    ['Network', (
        <Svg>
            <path d="M4.500 2.500h11v8h-11z" fill="#dfe6ee" stroke="#222" />
            <path d="M7 13.500h6M10 11v2M1.500 2v12M0 2h3v4H0z" stroke="#222" fill="#fff" />
        </Svg>
    )],
    ['Volume', (
        <Svg>
            <path d="M1 5h3l5-4v14l-5-4H1z" fill="#eef1f4" stroke="#444" />
            <circle cx="11" cy="11" r="4.500" fill="#d42a2a" />
            <path d="M9 9l4 4M13 9l-4 4" stroke="#fff" strokeWidth="1.500" />
        </Svg>
    )],
];

const Taskbar = () => (
    <footer className="relative flex h-[30px] shrink-0 items-center border-t border-[#c9d8e8] bg-linear-to-r from-[#869db8] via-[#a9c1de] via-10% to-[#8fa9c8]">
        <button aria-label="Start" className="-mt-1 mr-3 ml-[9px]">
            <FlagIcon />
        </button>
        <TaskButton label="Windows Explorer" stacked><FolderIcon /></TaskButton>
        <button aria-label="Internet Explorer" className="flex w-[46px] justify-center"><IEIcon size={18} /></button>
        <button aria-label="Tuti" className="flex w-[46px] justify-center"><TutiIcon /></button>
        <TaskButton label="BootICE" stacked><HornIcon /></TaskButton>
        <TaskButton label="WinArchiver" stacked><ZipIcon size={20} /></TaskButton>
        <TaskButton label="Copy files" progress><CopyIcon /></TaskButton>
        <div className="ml-auto flex items-center gap-2">
            {trayIcons.map(([name, icon]) => (
                <button key={name} aria-label={name}>{icon}</button>
            ))}
        </div>
        <time className="mr-[14px] ml-5 text-white">6:10 AM</time>
        <button aria-label="Show desktop" className="h-full w-[14px] border border-[#5f7690] bg-linear-to-b from-[#b4c8e0] to-[#7d96b5]" />
    </footer>
);

export default function App() {
    return (
        <div className="flex h-screen flex-col overflow-hidden bg-black font-['Open_Sans','Noto_Sans',sans-serif] text-xs">
            <Gradients />
            <main className="relative min-h-0 flex-1">
                <Desktop />
                <BootIceWindow />
                <ArchiverWindow />
                <Explorer />
                <CopyDialog />
                <HandCursor />
            </main>
            <Taskbar />
        </div>
    );
}
